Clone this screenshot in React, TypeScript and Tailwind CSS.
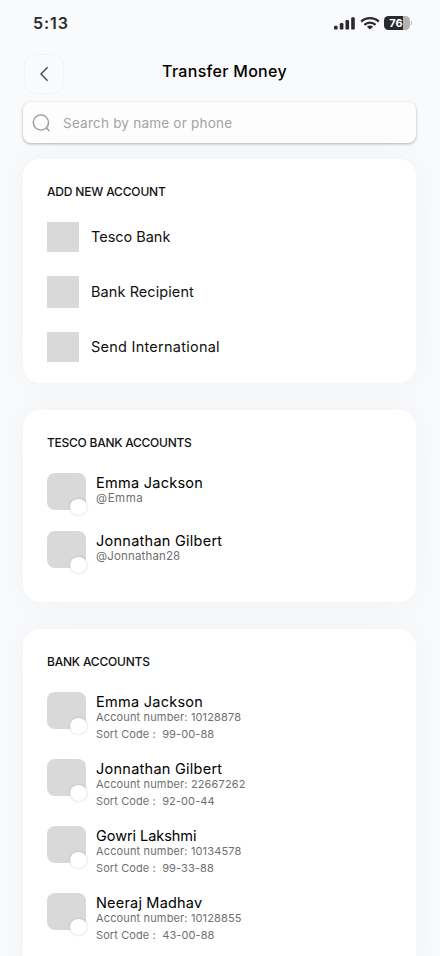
import React, { useState } from 'react';
import clsx from 'clsx';

interface AddOption {
  label: string;
  iconClass: string;
  labelClass: string;
}

interface Contact {
  name: string;
  nameClass: string;
  handle?: string;
  handleClass?: string;
  accountNumber?: string;
  sortCode?: string;
}

const addOptions: AddOption[] = [
  { label: 'Tesco Bank', iconClass: 'h-[30px]', labelClass: 'tracking-[-0.02px]' },
  { label: 'Bank Recipient', iconClass: 'h-8', labelClass: 'tracking-[0.08px]' },
  { label: 'Send International', iconClass: 'h-[30px]', labelClass: 'tracking-[0.25px]' },
];

const tescoContacts: Contact[] = [
  { name: 'Emma Jackson', nameClass: 'tracking-[0.27px]', handle: '@Emma', handleClass: 'tracking-[0.55px]' },
  { name: 'Jonnathan Gilbert', nameClass: 'tracking-[0.26px]', handle: '@Jonnathan28', handleClass: 'tracking-[0.15px]' },
];

const bankContacts: Contact[] = [
  { name: 'Emma Jackson', nameClass: 'tracking-[0.27px]', accountNumber: '10128878', sortCode: '99-00-88' },
  { name: 'Jonnathan Gilbert', nameClass: 'tracking-[0.26px]', accountNumber: '22667262', sortCode: '92-00-44' },
  { name: 'Gowri Lakshmi', nameClass: 'tracking-[-0.06px]', accountNumber: '10134578', sortCode: '99-33-88' },
  { name: 'Neeraj Madhav', nameClass: 'tracking-[0.19px]', accountNumber: '10128855', sortCode: '43-00-88' },
];

const StatusBar: React.FC = () => (
  <div className="flex h-[54px] items-start justify-between pl-[33px] pr-7 pt-[13px]">
    <span className="text-[16px] font-semibold leading-[20px] tracking-[0.9px] text-[#2b2b2e]">5:13</span>
    <div className="flex items-center gap-[5px] pt-[3px]">
      <svg width="21" height="13" viewBox="0 0 21 13" fill="#29292e">
        <rect x="0" y="8.8" width="3.6" height="3.8" rx="1.2" />
        <rect x="5.8" y="6" width="3.6" height="6.6" rx="1.2" />
        <rect x="11.5" y="3" width="3.6" height="9.6" rx="1.2" />
        <rect x="17.2" y="0.2" width="3.6" height="12.4" rx="1.2" />
      </svg>
      <svg width="20" height="13" viewBox="0 0 20 13" fill="none" stroke="#29292e" strokeWidth="2.2">
        <path d="M1.2 4.6C6 0 14 0 18.8 4.6" />
        <path d="M4.4 7.9C7.6 4.9 12.4 4.9 15.6 7.9" />
        <path d="M10 12.6L6.9 9.7C8.6 8.2 11.4 8.2 13.1 9.7Z" fill="#29292e" stroke="none" />
      </svg>
      <div className="-ml-px flex items-center gap-px">
        <div className="flex h-[14px] w-[26px] items-center justify-center rounded-[4.5px] bg-linear-to-r from-[#29292e] from-73% to-[#b3b3b5] to-73% pr-px text-[11px] font-bold leading-none text-white">
          76
        </div>
        <div className="h-[4px] w-[1.5px] rounded-r-full bg-[#b3b3b5]" />
      </div>
    </div>
  </div>
);

const Header: React.FC = () => (
  <header className="grid h-10 grid-cols-[1fr_auto_1fr] pl-6 pr-[15px]">
    <button
      aria-label="Back"
      className="flex h-10 w-10 items-center justify-center rounded-[11px] border border-[#f3f3f5]"
    >
      <svg width="10" height="16" viewBox="0 0 10 16" fill="none" stroke="#4b4b4b" strokeWidth="1.4">
        <path d="M8.6 1.3L2 8L8.6 14.7" />
      </svg>
    </button>
    <h1 className="pt-[6px] text-[16px] font-medium leading-[22px] tracking-[0.3px] text-black">Transfer Money</h1>
  </header>
);

const Card: React.FC<{ title: string; className?: string; titleClass?: string; children: React.ReactNode }> = ({
  title,
  className,
  titleClass,
  children,
}) => (
  <section
    className={clsx('shrink-0 rounded-[17px] bg-white px-6 pt-[25px] shadow-[0_0_36px_rgba(0,0,0,0.04)]', className)}
  >
    <h2 className={clsx('text-[12px] font-medium leading-4 text-[#111]', titleClass)}>{title}</h2>
    {children}
  </section>
);

const Avatar: React.FC = () => (
  <div className="relative h-[37px] w-[39px] shrink-0 rounded-[8px] bg-[#d9d9d9]">
    <div className="absolute -bottom-[5px] -right-[0.5px] h-[16.5px] w-[16.5px] rounded-full bg-white shadow-[0_0_2px_rgba(0,0,0,0.25)]" />
  </div>
);

const ContactRow: React.FC<{ contact: Contact }> = ({ contact }) => (
  <div className="flex gap-[10px]">
    <Avatar />
    <div className="text-[11px] text-[#6f6f6f]">
      <p className={clsx('text-[14.5px] leading-5 text-black', contact.nameClass)}>{contact.name}</p>
      {contact.handle && (
        <p className={clsx('-mt-[3px] text-[11.5px] leading-4', contact.handleClass)}>{contact.handle}</p>
      )}
      {contact.accountNumber && (
        <p className="-mt-[3px] leading-4 tracking-[0.14px]">Account number: {contact.accountNumber}</p>
      )}
      {contact.sortCode && (
        <p className="mt-px whitespace-pre leading-4 tracking-[0.1px]">{`Sort Code :  ${contact.sortCode}`}</p>
      )}
    </div>
  </div>
);

export default function App() {
  const [query, setQuery] = useState('');

  return (
    <div className="h-[956px] w-full overflow-hidden bg-[#f9fafc] font-[Inter,sans-serif]">
      <StatusBar />
      <Header />
      <main className="flex flex-col pl-[23px] pr-6 pt-2">
        <label className="flex h-[41px] shrink-0 items-center gap-[13px] rounded-[8px] bg-[#fdfdfd] pl-[9px] shadow-[0_1px_3px_rgba(0,0,0,0.3)]">
          <svg width="18" height="18" viewBox="0 0 18 18" fill="none" stroke="#969696" strokeWidth="1.4">
            <circle cx="8.9" cy="8.5" r="7.6" />
            <path d="M14.4 14L17 16.6" strokeLinecap="round" />
          </svg>
          <input
            value={query}
            onChange={(e) => setQuery(e.target.value)}
            placeholder="Search by name or phone"
            className="w-[300px] bg-transparent pt-px text-[13.5px] tracking-[0.22px] text-black outline-none placeholder:text-[#a3a3a3]"
          />
        </label>

        <Card title="ADD NEW ACCOUNT" titleClass="tracking-[-0.17px]" className="mt-4 h-[224px]">
          <div className="mt-[9px] flex flex-col">
            {addOptions.map((option) => (
              <div key={option.label} className="flex h-[55px] items-center gap-3">
                <div className={clsx('w-8 bg-[#d9d9d9]', option.iconClass)} />
                <span className={clsx('text-[14.5px] leading-5 text-[#111]', option.labelClass)}>{option.label}</span>
              </div>
            ))}
          </div>
        </Card>

        <Card title="TESCO BANK ACCOUNTS" titleClass="tracking-[-0.25px]" className="mt-[27px] h-[192px]">
          <div className="mt-[22px] flex flex-col gap-[21px]">
            {tescoContacts.map((contact) => (
              <ContactRow key={contact.name} contact={contact} />
            ))}
          </div>
        </Card>

        <Card title="BANK ACCOUNTS" titleClass="tracking-[-0.2px]" className="mt-[27px] h-[360px]">
          <div className="mt-[22px] flex flex-col gap-[17px]">
            {bankContacts.map((contact) => (
              <ContactRow key={contact.name} contact={contact} />
            ))}
          </div>
        </Card>
      </main>
    </div>
  );
}
